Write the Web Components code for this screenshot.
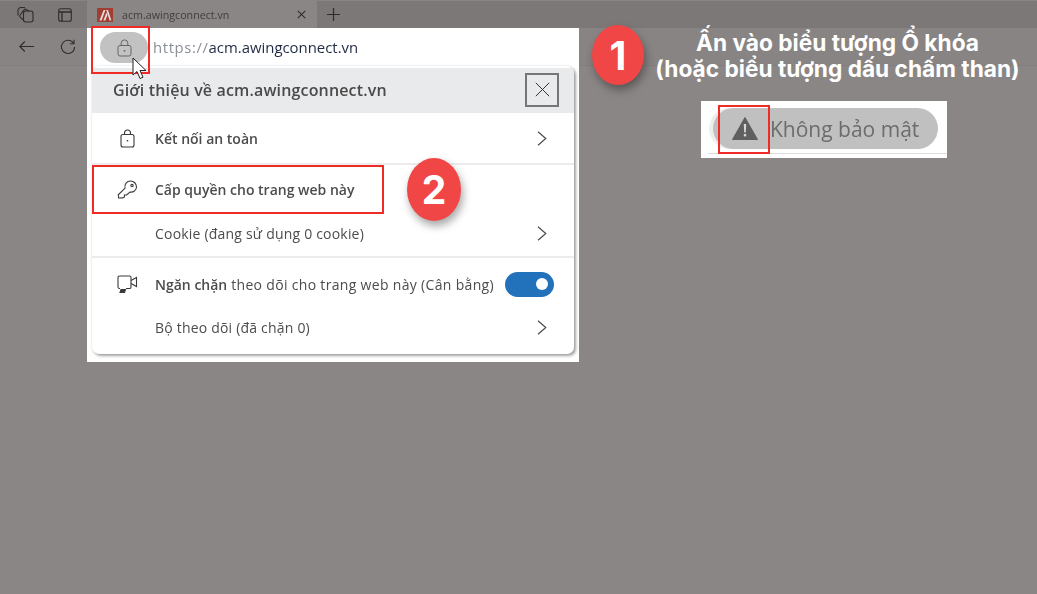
<!DOCTYPE html>
<html lang="vi">
<head>
<meta charset="utf-8">
<title>acm.awingconnect.vn</title>
<style>
html, body { margin: 0; padding: 0; background: #8a8685; }
body { width: 1037px; height: 594px; overflow: hidden; font-family: "Open Sans", "Noto Sans", sans-serif; }
</style>
</head>
<body>
<browser-guide></browser-guide>

<script>
// thanh tab tren cung
class thanhTab extends HTMLElement {
    constructor() {
        super();
        this.attachShadow({ mode: "open" });
        this.shadowRoot.innerHTML = `
        <style>
        :host { display: flex; height: 28px; background: #7b7877; border-top: 1px solid #888483; box-sizing: border-box; }
        .botones { display: flex; width: 87px; align-items: center; gap: 24px; padding-left: 17px; box-sizing: border-box; }
        .tab { display: flex; align-items: center; width: 230px; height: 27px; background: #8a8685; padding-left: 10px; box-sizing: border-box; font: 10.7px "Open Sans", sans-serif; color: #403e3e; filter: blur(.3px); }
        .tab span { margin-left: 9px; flex: 1; }
        .mas { margin-left: 10px; align-self: center; display: flex; }
        svg { display: block; fill: none; stroke: #2e2c2c; stroke-width: 1.1; }
        .tab svg.x { margin-right: 11px; }
        </style>
        <div class="botones">
            <svg width="17" height="17" viewBox="0 0 17 17"><rect x="6.500" y="5" width="9.500" height="11" rx="2.200"/><path d="M6.500 14 3.300 11.300a1.600 1.600 0 0 1-.2-2.300L7 3.900a1.600 1.600 0 0 1 2.200-.4L12 5.200"/><path d="M1 9.500V4.500a3 3 0 0 1 3-3h4"/></svg>
            <svg width="14" height="14" viewBox="0 0 14 14"><rect x=".7" y=".8" width="12.600" height="12.400" rx="2"/><path d="M.7 4h12.600M4 4v9.200" stroke-width="1.300"/></svg>
        </div>
        <div class="tab">
            <svg width="16" height="14" viewBox="0 0 16 14" style="stroke:none"><rect width="16" height="14" fill="#a23d33"/><path d="M2.500 12.500 6.600 2h1.800L4.600 12.500zM6.400 12.500l3-8 1 2.600-2 5.400zM9.200 2h1.800l3.400 10.500h-1.800z" fill="#e6dcda"/></svg>
            <span>acm.awingconnect.vn</span>
            <svg class="x" width="9" height="9" viewBox="0 0 9 9"><path d="M.8.8l7.400 7.400M8.200.8.8 8.200"/></svg>
        </div>
        <div class="mas"><svg width="13" height="13" viewBox="0 0 13 13"><path d="M6.500 0v13M0 6.500h13" stroke-width="1.200"/></svg></div>
        `;
    }
}
customElements.define("thanh-tab", thanhTab);

// thanh dieu huong, nen toi phia sau cua so
class thanhNav extends HTMLElement {
    constructor() {
        super();
        this.attachShadow({ mode: "open" });
        this.shadowRoot.innerHTML = `
        <style>
        :host { display: flex; height: 38px; align-items: center; gap: 26px; padding-left: 19px; box-sizing: border-box; background: #888483; border-bottom: 1px solid #827e7d; }
        svg { display: block; fill: none; stroke: #2e2c2c; stroke-width: 1.1; }
        </style>
        <svg width="15" height="11" viewBox="0 0 15 11"><path d="M15 5.500H.8M5.800.5.800 5.500l5 5"/></svg>
        <svg width="16" height="16" viewBox="0 0 16 16"><path d="M13.600 4.400A6.600 6.600 0 1 0 14.600 8"/><path d="M14 .8v4h-4"/></svg>
        `;
    }
}
customElements.define("thanh-nav", thanhNav);

// una fila del menu
class filaMenu extends HTMLElement {
    constructor() {
        super();
        this.attachShadow({ mode: "open" });
        this.shadowRoot.innerHTML = `
        <style>
        :host { display: flex; align-items: center; height: var(--alto, 45px); box-sizing: border-box; font: 14px "Open Sans", sans-serif; letter-spacing: .2px; color: #4c4c4c; }
        .icono { width: 63px; display: flex; justify-content: center; padding-left: 8px; box-sizing: border-box; }
        .texto { flex: 1; white-space: nowrap; }
        .fin { display: flex; padding-right: 27px; }
        </style>
        <div class="icono"><slot name="icono"></slot></div>
        <div class="texto"><slot></slot></div>
        <div class="fin"><slot name="fin"></slot></div>
        `;
    }
}
customElements.define("fila-menu", filaMenu);

// el popup con la informacion del sitio
class popupSitio extends HTMLElement {
    constructor() {
        super();
        this.attachShadow({ mode: "open" });
        const flecha = `<svg slot="fin" width="10" height="15" viewBox="0 0 10 15" fill="none" stroke="#4a4a4a" stroke-width="1.200"><path d="M1 .7 8.800 7.500 1 14.300"/></svg>`;
        this.shadowRoot.innerHTML = `
        <style>
        :host { position: absolute; left: 87px; top: 28px; width: 492px; height: 334px; background: #fff; display: block; filter: blur(.3px); }
        .direccion { display: flex; align-items: center; height: 38px; padding-left: 66px; box-sizing: border-box; font: 14.900px "Open Sans", sans-serif; color: #1f2a44; }
        .direccion span { color: #8b9097; letter-spacing: .6px; }
        .pildora { position: absolute; left: 13px; top: 4px; width: 48px; height: 31px; border-radius: 16px; background: #c2c2c2; display: flex; align-items: center; justify-content: center; }
        .caja { position: absolute; left: 5px; top: 38px; width: 482px; height: 288px; padding-top: 2px; box-sizing: border-box; background: #fff; border-radius: 7px; box-shadow: 2px 2px 3px rgba(0,0,0,.35), 0 0 2px rgba(0,0,0,.15); overflow: hidden; }
        .cabecera { display: flex; align-items: center; justify-content: space-between; height: 45px; padding: 0 15px 2px 21px; box-sizing: border-box; background: #e9eaec; font: 600 16px "Open Sans", sans-serif; letter-spacing: .15px; color: #4a4a4a; }
        .cerrar { width: 34px; height: 34px; box-sizing: border-box; border: 2px solid #767676; display: flex; align-items: center; justify-content: center; }
        hr { border: 0; height: 2px; margin: 0; background: #ececec; }
        .f1 { --alto: 50px; }
        .f2 { --alto: 48px; }
        .f3 { --alto: 43px; padding-bottom: 2px; }
        .f4 { --alto: 52px; }
        .f5 { --alto: 36px; padding-bottom: 2px; }
        fila-menu b { font-weight: 600; letter-spacing: 0; }
        .ancho { letter-spacing: .32px; }
        .interruptor { width: 49px; height: 25px; border-radius: 13px; background: #2272bb; display: flex; align-items: center; justify-content: flex-end; padding-right: 6px; box-sizing: border-box; margin-right: -7px; }
        .interruptor i { width: 12px; height: 12px; border-radius: 50%; background: #fff; display: block; }
        svg { display: block; }
        </style>
        <div class="direccion"><span>https://</span>acm.awingconnect.vn</div>
        <div class="pildora">
            <svg width="15" height="18" viewBox="0 0 15 18" fill="none" stroke="#666" stroke-width="1"><rect x="1" y="6.500" width="13" height="10.500" rx="2"/><path d="M4.200 6.500V4.200a3.300 3.300 0 0 1 6.600 0v2.300"/><rect x="6.700" y="11" width="1.600" height="1.600" fill="#666" stroke="none"/></svg>
        </div>
        <div class="caja">
            <div class="cabecera"><span>Giới thiệu về acm.awingconnect.vn</span>
                <div class="cerrar"><svg width="15" height="15" viewBox="0 0 15 15" fill="none" stroke="#333" stroke-width="1"><path d="M.8.8l13.400 13.400M14.200.8.8 14.200"/></svg></div>
            </div>
            <fila-menu class="f1">
                <svg slot="icono" width="15" height="19" viewBox="0 0 15 19" fill="none" stroke="#3a3a3a" stroke-width="1.100"><rect x="1" y="5.500" width="13" height="12.500" rx="2"/><path d="M4.500 5.500V4a3 3 0 0 1 6 0v1.500"/><rect x="6.800" y="11" width="1.400" height="1.400" fill="#3a3a3a" stroke="none"/></svg>
                <b>Kết nối an toàn</b>
                ${flecha}
            </fila-menu>
            <hr>
            <fila-menu class="f2">
                <svg slot="icono" width="21" height="19" viewBox="0 0 21 19" fill="none" stroke="#3a3a3a" stroke-width="1.100"><path d="M13.500 1a6 6 0 0 1 6 6c0 3.300-3.200 5.600-6.600 5L9.600 15H7.400v2l-1.600.9-4.200.1-.3-3.200 6.800-6.600C7.100 4.300 9.800 1 13.500 1z"/><circle cx="15" cy="5.600" r="1.200"/></svg>
                <b>Cấp quyền cho trang web này</b>
            </fila-menu>
            <fila-menu class="f3">
                Cookie (đang sử dụng 0 cookie)
                ${flecha}
            </fila-menu>
            <hr>
            <fila-menu class="f4">
                <svg slot="icono" width="21" height="19" viewBox="0 0 21 19" fill="none" stroke="#3a3a3a" stroke-width="1.100"><path d="M3 13.500H2.500a1.500 1.500 0 0 1-1.500-1.500V2.500A1.500 1.500 0 0 1 2.500 1h10A1.500 1.500 0 0 1 14 2.500V12a1.500 1.500 0 0 1-1.500 1.500H9"/><path d="M14 5.500l5.500-3v9l-5.500-3"/><path d="M3 17.500l1-3h4.500l-1 3z" fill="#3a3a3a"/></svg>
                <span class="ancho"><b>Ngăn chặn</b> theo dõi cho trang web này (Cân bằng)</span>
                <div slot="fin" class="interruptor"><i></i></div>
            </fila-menu>
            <fila-menu class="f5">
                Bộ theo dõi (đã chặn 0)
                ${flecha}
            </fila-menu>
        </div>
        `;
    }
}
customElements.define("popup-sitio", popupSitio);

// circulo rojo numerado
class numeroPaso extends HTMLElement {
    constructor() {
        super();
        this.attachShadow({ mode: "open" });
        this.shadowRoot.innerHTML = `
        <style>
        :host { position: absolute; border-radius: 50%; background: #f14646; color: #fff; display: flex; align-items: center; justify-content: center; font: 700 39px Inter, "Liberation Sans", sans-serif; box-shadow: 2px 5px 9px rgba(0,0,0,.35); }
        </style>
        <slot></slot>
        `;
    }
}
customElements.define("numero-paso", numeroPaso);

// recuadro rojo de anotacion
class marcoRojo extends HTMLElement {
    constructor() {
        super();
        this.attachShadow({ mode: "open" });
        this.shadowRoot.innerHTML = `
        <style>
        :host { position: absolute; box-sizing: border-box; border: 2px solid #ee2b24; display: block; }
        </style>
        `;
    }
}
customElements.define("marco-rojo", marcoRojo);

// columna de la derecha con las instrucciones
class notaDerecha extends HTMLElement {
    constructor() {
        super();
        this.attachShadow({ mode: "open" });
        this.shadowRoot.innerHTML = `
        <style>
        :host { position: absolute; left: 639px; top: 30px; width: 397px; display: flex; flex-direction: column; align-items: center; color: #fff; font: 700 22.700px/26px Inter, "Liberation Sans", sans-serif; text-align: center; }
        .lineas { white-space: nowrap; }
        .captura { align-self: flex-start; margin: 19px 0 0 62px; width: 246px; height: 57px; background: #fff; display: flex; align-items: flex-start; padding: 7px 0 0 12px; box-sizing: border-box; position: relative; filter: blur(.3px); }
        .pildora { width: 225px; height: 41px; border-radius: 21px; background: #c0c0c0; display: flex; align-items: center; font: 21px "Open Sans", sans-serif; color: #6c6c6c; padding-left: 19px; box-sizing: border-box; gap: 12px; box-shadow: -4px 0 0 #eee; }
        .linea { position: absolute; left: 7px; right: 0; bottom: 4px; height: 1px; background: #ddd; }
        svg { display: block; }
        </style>
        <div class="lineas">Ấn vào biểu tượng Ổ khóa<br>(hoặc biểu tượng dấu chấm than)</div>
        <div class="captura">
            <div class="pildora">
                <svg width="26" height="23" viewBox="0 0 26 23"><path d="M13 .5 25.500 22.500H.5z" fill="#5f5f5f" stroke="#5f5f5f" stroke-linejoin="round"/><path d="M11.800 7h2.400l-.4 8.500h-1.600z" fill="#d8d8d8"/><rect x="11.800" y="17" width="2.400" height="2.400" fill="#d8d8d8"/></svg>
                <span>Không bảo mật</span>
            </div>
            <div class="linea"></div>
        </div>
        `;
    }
}
customElements.define("nota-derecha", notaDerecha);

// pagina completa
class browserGuide extends HTMLElement {
    constructor() {
        super();
        this.attachShadow({ mode: "open" });
        this.shadowRoot.innerHTML = `
        <style>
        :host { display: block; position: relative; width: 1037px; height: 594px; background: #8a8685; overflow: hidden; }
        .uno { left: 592px; top: 25px; width: 52px; height: 60px; }
        .dos { left: 407px; top: 158px; width: 54px; height: 63px; }
        .cursor { position: absolute; left: 132px; top: 57px; }
        .m1 { left: 91px; top: 26px; width: 59px; height: 48px; }
        .m2 { left: 92px; top: 165px; width: 292px; height: 49px; }
        .m3 { left: 718px; top: 105px; width: 52px; height: 49px; }
        </style>
        <thanh-tab></thanh-tab>
        <thanh-nav></thanh-nav>
        <popup-sitio></popup-sitio>
        <nota-derecha></nota-derecha>
        <numero-paso class="uno">1</numero-paso>
        <numero-paso class="dos">2</numero-paso>
        <marco-rojo class="m1"></marco-rojo>
        <marco-rojo class="m2"></marco-rojo>
        <marco-rojo class="m3"></marco-rojo>
        <svg class="cursor" width="18" height="24" viewBox="0 0 18 24"><path d="M1 1v17l4-3.500 3 7 3-1.300-3-6.700h6z" fill="#fff" stroke="#222" stroke-width="1"/></svg>
        `;
    }
}
customElements.define("browser-guide", browserGuide);
</script>
</body>
</html>
